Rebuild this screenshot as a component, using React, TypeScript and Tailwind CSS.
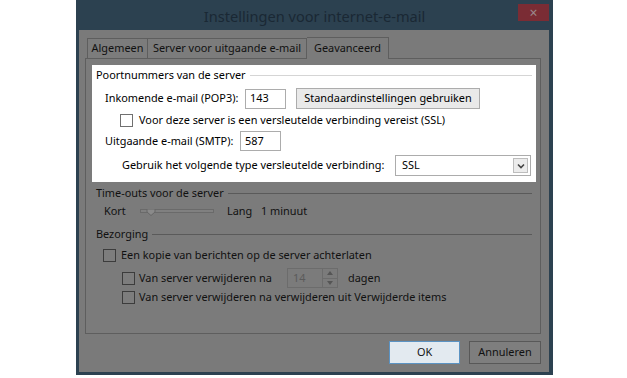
import React from 'react';

const font = { fontFamily: '"Noto Sans", "Open Sans", Arial, sans-serif' };

function Box({ dark }: { dark?: boolean }) {
  return (
    <span
      className={
        dark
          ? 'block w-[13px] h-[13px] border border-[#3c3c3c] bg-[#7d7d7d] shrink-0'
          : 'block w-[13px] h-[13px] border border-[#707070] bg-white shrink-0'
      }
    />
  );
}

function GroupHeader({ label, dark, width }: { label: string; dark?: boolean; width: string }) {
  return (
    <div className={`flex items-center h-[16px] ${width}`}>
      <span className="pr-[4px] leading-none">{label}</span>
      <span className={dark ? 'flex-1 h-px bg-[#5a5a5a]' : 'flex-1 h-px bg-[#d5d5d5]'} />
    </div>
  );
}

export default function App() {
  return (
    <div className="w-[627px] h-[378px] bg-white overflow-hidden text-[10.9px] text-[#111] whitespace-nowrap" style={font}>
      <div className="ml-[76px] w-[477px] h-[375px] bg-[#2c4150] flex flex-col">
        {/* title bar */}
        <div className="relative h-[30px] flex items-center justify-center">
          <span className="text-[14.6px] text-[#1a2834] pt-[3px]">Instellingen voor internet-e-mail</span>
          <div className="absolute left-[442px] top-[4px] w-[31px] h-[17px] bg-[#7a2c34] flex items-center justify-center text-[#9a8a8c] text-[14px] leading-none">
            ×
          </div>
        </div>

        {/* dialog body */}
        <div className="ml-[3px] w-[470px] h-[342px] bg-[#7a7a7a] pl-[6px] pt-[7px]">
          {/* tabs */}
          <div className="flex items-end h-[21px] pl-[2px]">
            <div className="h-[20px] w-[61px] border border-b-0 border-[#5e5e5e] bg-[#7c7c7c] flex items-center justify-center">Algemeen</div>
            <div className="h-[20px] w-[159px] border border-b-0 border-l-0 border-[#5e5e5e] bg-[#7c7c7c] flex items-center justify-center">Server voor uitgaande e-mail</div>
            <div className="h-[22px] w-[82px] border border-b-0 border-l-0 border-[#5e5e5e] bg-[#7b7b7b] flex items-center justify-center -mb-px relative z-10">Geavanceerd</div>
          </div>

          {/* panel */}
          <div className="w-[456px] h-[276px] border border-[#5e5e5e] bg-[#7b7b7b] pt-[6px]">
            {/* highlighted (white) section */}
            <div className="ml-[6px] w-[444px] h-[117px] bg-white text-black pl-[4px] pt-[2px]">
              <GroupHeader label="Poortnummers van de server" width="w-[436px]" />
              <div className="flex items-center h-[21px] mt-[5px] pl-[9px]">
                <span className="w-[140px] shrink-0">Inkomende e-mail (POP3):</span>
                <span className="w-[41px] h-[20px] border border-[#acacac] flex items-center pl-[4px] shrink-0">143</span>
                <span className="ml-[10px] w-[184px] h-[21px] border border-[#acacac] bg-[#e9e9e9] flex items-center justify-center shrink-0">
                  Standaardinstellingen gebruiken
                </span>
              </div>
              <div className="flex items-center h-[14px] mt-[4px] pl-[24px]">
                <Box />
                <span className="ml-[6px]">Voor deze server is een versleutelde verbinding vereist (SSL)</span>
              </div>
              <div className="flex items-center h-[20px] mt-[4px] pl-[9px]">
                <span className="w-[135px] shrink-0">Uitgaande e-mail (SMTP):</span>
                <span className="w-[41px] h-[20px] border border-[#acacac] flex items-center pl-[4px] shrink-0">587</span>
              </div>
              <div className="flex items-center h-[21px] mt-[4px] pl-[26px]">
                <span className="w-[273px] shrink-0">Gebruik het volgende type versleutelde verbinding:</span>
                <span className="w-[136px] h-[21px] border border-[#acacac] flex items-center pl-[6px] relative shrink-0">
                  SSL
                  <span className="absolute right-[2px] top-[2px] w-[15px] h-[15px] border border-[#bdbdbd] bg-[#ececec] flex items-center justify-center">
                    <svg width="8" height="6" viewBox="0 0 8 6">
                      <path d="M1 1.5 L4 4.5 L7 1.5" stroke="#444" strokeWidth="1.6" fill="none" />
                    </svg>
                  </span>
                </span>
              </div>
            </div>

            {/* time-outs */}
            <div className="pl-[10px] mt-[3px]">
              <GroupHeader label="Time-outs voor de server" dark width="w-[436px]" />
              <div className="flex items-center h-[18px] mt-[1px] pl-[8px]">
                <span className="w-[36px]">Kort</span>
                <span className="relative w-[74px] h-[4px] border border-[#6a6a6a] bg-[#808080]">
                  <svg className="absolute left-[5px] -top-[1px]" width="10" height="7" viewBox="0 0 10 7">
                    <path d="M1 0 H9 V3 L5 6.5 L1 3 Z" fill="#8a8a8a" stroke="#666" strokeWidth="1" />
                  </svg>
                </span>
                <span className="ml-[13px] w-[34px]">Lang</span>
                <span>1 minuut</span>
              </div>

              {/* bezorging */}
              <div className="mt-[6px]">
                <GroupHeader label="Bezorging" dark width="w-[436px]" />
              </div>
              <div className="flex items-center h-[14px] mt-[6px] pl-[7px]">
                <Box dark />
                <span className="ml-[5px]">Een kopie van berichten op de server achterlaten</span>
              </div>
              <div className="flex items-center h-[20px] mt-[6px] pl-[26px]">
                <Box dark />
                <span className="ml-[4px] w-[148px] shrink-0">Van server verwijderen na</span>
                <span className="w-[51px] h-[20px] border border-[#6c6c6c] flex items-center relative shrink-0">
                  <span className="pl-[5px] text-[#5a5a5a]">14</span>
                  <span className="absolute right-0 top-0 w-[15px] h-[18px] border-l border-[#6c6c6c] flex flex-col">
                    <span className="flex-1 flex items-center justify-center border-b border-[#6c6c6c]">
                      <svg width="6" height="4" viewBox="0 0 6 4"><path d="M0 4 L3 0 L6 4 Z" fill="#555" /></svg>
                    </span>
                    <span className="flex-1 flex items-center justify-center">
                      <svg width="6" height="4" viewBox="0 0 6 4"><path d="M0 0 L3 4 L6 0 Z" fill="#555" /></svg>
                    </span>
                  </span>
                </span>
                <span className="ml-[10px]">dagen</span>
              </div>
              <div className="flex items-center h-[14px] mt-[2px] pl-[26px]">
                <Box dark />
                <span className="ml-[4px]">Van server verwijderen na verwijderen uit Verwijderde items</span>
              </div>
            </div>
          </div>

          {/* footer buttons */}
          <div className="flex justify-end gap-[9px] mt-[7px] pr-[8px]">
            <span className="w-[71px] h-[23px] border border-[#5b93c3] bg-[#e3eaf0] flex items-center justify-center">OK</span>
            <span className="w-[72px] h-[23px] border border-[#585858] bg-[#7e7e7e] flex items-center justify-center">Annuleren</span>
          </div>
        </div>
      </div>
    </div>
  );
}
